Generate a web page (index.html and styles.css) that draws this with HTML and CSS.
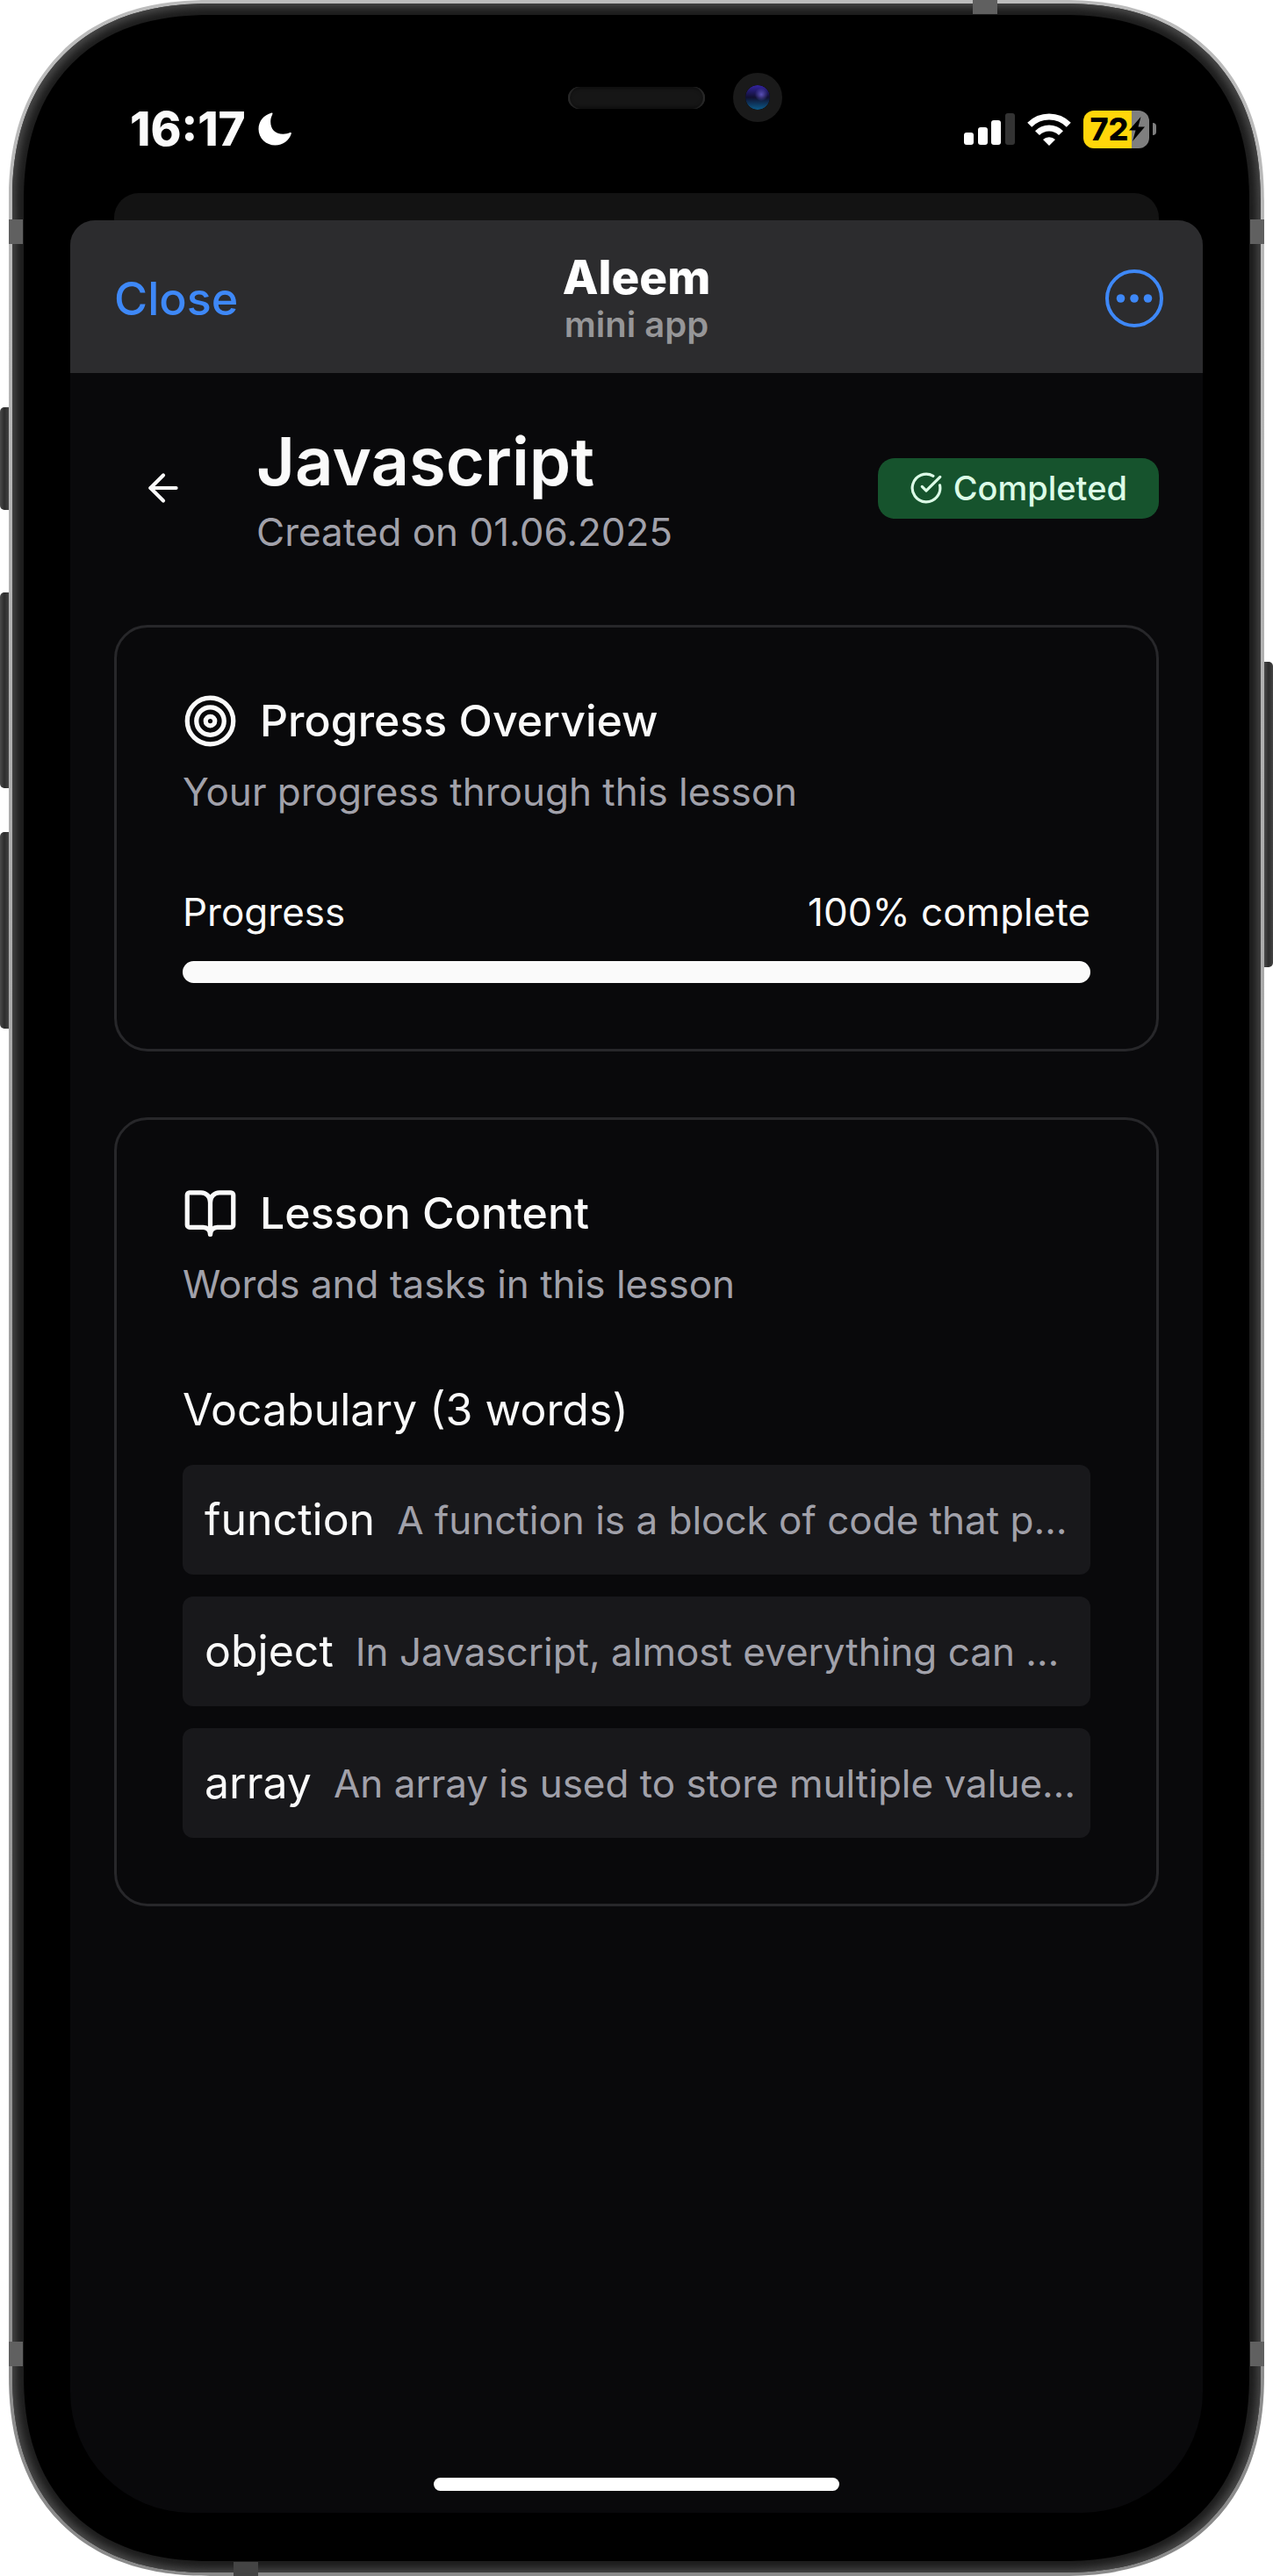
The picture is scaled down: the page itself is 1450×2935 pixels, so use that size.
FILE: index.html
```html
<!DOCTYPE html>
<html lang="en">
<head>
    <meta charset="UTF-8">
    <meta name="viewport" content="width=device-width, initial-scale=1.0">
    <title>Aleem - Javascript</title>
    <link rel="stylesheet" href="styles.css">
</head>
<body>
    <div class="phone">
        <span class="side-button mute"></span>
        <span class="side-button volume-up"></span>
        <span class="side-button volume-down"></span>
        <span class="side-button power"></span>

        <div class="frame">
            <span class="antenna top"></span>
            <span class="antenna bottom"></span>
            <span class="antenna upper-left"></span>
            <span class="antenna upper-right"></span>
            <span class="antenna lower-left"></span>
            <span class="antenna lower-right"></span>

            <div class="ring">
                <div class="bezel">
                    <div class="notch">
                        <span class="speaker"></span>
                        <span class="camera"></span>
                    </div>

                    <div class="status-bar">
                        <div class="status-left">
                            <span class="clock">16:17</span>
                            <svg class="moon" viewBox="0 0 38 38" aria-hidden="true">
                                <path d="M15.500 0.500C6.500 3 0.500 10 0.500 19C0.500 29.500 9 37.500 19.500 37.500C28.500 37.500 35.500 32 37.800 24.300C38.100 23.300 37.200 22.600 36.300 23.100C34 24.300 31.500 24.800 28.500 24.800C19.500 24.800 14.200 19.300 14.200 10.800C14.200 7.500 15 5 16.200 2.500C16.800 1.200 16.500 0.300 15.500 0.500Z" fill="#fff"/>
                            </svg>
                        </div>
                        <div class="status-right">
                            <svg class="signal" viewBox="0 0 58 36" aria-hidden="true">
                                <rect x="0" y="22" width="11" height="14" rx="3" fill="#fff"/>
                                <rect x="16" y="16" width="11" height="20" rx="3" fill="#fff"/>
                                <rect x="31" y="8" width="11" height="28" rx="3" fill="#fff"/>
                                <rect x="47" y="0" width="11" height="36" rx="3" fill="#333"/>
                            </svg>
                            <svg class="wifi" viewBox="0 0 50 37" aria-hidden="true">
                                <g fill="none" stroke="#fff" stroke-width="7">
                                    <path d="M2.700 13.300A31.500 31.500 0 0 1 47.300 13.300"/>
                                    <path d="M11.500 22.600A19 19 0 0 1 38.500 22.600"/>
                                </g>
                                <path d="M25 37L18 30A10 10 0 0 1 32 30Z" fill="#fff"/>
                            </svg>
                            <div class="battery">
                                <span class="battery-body">
                                    72
                                    <svg class="bolt" viewBox="0 0 18 28" aria-hidden="true">
                                        <path d="M13.500 0L0 15.500H7.500L4 28L18 11.500H10.500Z" fill="#000"/>
                                    </svg>
                                </span>
                                <span class="battery-tip"></span>
                            </div>
                        </div>
                    </div>

                    <div class="back-card"></div>

                    <div class="sheet">
                        <header class="app-header">
                            <button class="close-button" type="button">Close</button>
                            <div class="app-title">
                                <strong>Aleem</strong>
                                <span>mini app</span>
                            </div>
                            <button class="more-button" type="button" aria-label="More">
                                <svg viewBox="0 0 68 68" aria-hidden="true">
                                    <circle cx="34" cy="34" r="31" fill="none" stroke="currentColor" stroke-width="4"/>
                                    <g fill="currentColor">
                                        <circle cx="18.500" cy="34" r="4.800"/>
                                        <circle cx="34" cy="34" r="4.800"/>
                                        <circle cx="49.500" cy="34" r="4.800"/>
                                    </g>
                                </svg>
                            </button>
                        </header>

                        <main>
                            <div class="lesson-header">
                                <button class="back-button" type="button" aria-label="Back">
                                    <svg class="icon" viewBox="0 0 24 24" aria-hidden="true">
                                        <path d="m12 19-7-7 7-7"/>
                                        <path d="M19 12H5"/>
                                    </svg>
                                </button>
                                <div class="lesson-title">
                                    <h1>Javascript</h1>
                                    <p>Created on 01.06.2025</p>
                                </div>
                                <span class="badge">
                                    <svg class="icon" viewBox="0 0 24 24" aria-hidden="true">
                                        <path d="M21.801 10A10 10 0 1 1 17 3.335"/>
                                        <path d="m9 11 3 3L22 4"/>
                                    </svg>
                                    Completed
                                </span>
                            </div>

                            <section class="card">
                                <h2>
                                    <svg class="icon" viewBox="0 0 24 24" aria-hidden="true">
                                        <circle cx="12" cy="12" r="10"/>
                                        <circle cx="12" cy="12" r="6"/>
                                        <circle cx="12" cy="12" r="2"/>
                                    </svg>
                                    Progress Overview
                                </h2>
                                <p class="description">Your progress through this lesson</p>
                                <div class="progress-row">
                                    <label for="lessonProgress">Progress</label>
                                    <span>100% complete</span>
                                </div>
                                <progress id="lessonProgress" value="100" max="100"></progress>
                            </section>

                            <section class="card">
                                <h2>
                                    <svg class="icon" viewBox="0 0 24 24" aria-hidden="true">
                                        <path d="M12 7v14"/>
                                        <path d="M3 18a1 1 0 0 1-1-1V4a1 1 0 0 1 1-1h5a4 4 0 0 1 4 4 4 4 0 0 1 4-4h5a1 1 0 0 1 1 1v13a1 1 0 0 1-1 1h-6a3 3 0 0 0-3 3 3 3 0 0 0-3-3z"/>
                                    </svg>
                                    Lesson Content
                                </h2>
                                <p class="description">Words and tasks in this lesson</p>
                                <h3>Vocabulary (3 words)</h3>
                                <ul class="words">
                                    <li>
                                        <span class="word">function</span>
                                        <span class="meaning">A function is a block of code that performs a particular task</span>
                                    </li>
                                    <li>
                                        <span class="word">object</span>
                                        <span class="meaning">In Javascript, almost everything can be an object</span>
                                    </li>
                                    <li>
                                        <span class="word">array</span>
                                        <span class="meaning">An array is used to store multiple values in a single variable</span>
                                    </li>
                                </ul>
                            </section>
                        </main>

                        <span class="home-indicator"></span>
                    </div>
                </div>
            </div>
        </div>
    </div>
</body>
</html>
```
FILE: styles.css
```css
* {
    box-sizing: border-box;
}

body {
    margin: 0;
    background-color: #fff;
    color: #fafafa;
    font-family: Inter, "Liberation Sans", sans-serif;
}

h1, h2, h3, p, ul {
    margin: 0;
    padding: 0;
    font-weight: 400;
}

button {
    padding: 0;
    border: none;
    background: none;
    color: inherit;
    font-family: inherit;
    cursor: pointer;
}

svg {
    display: block;
    flex-shrink: 0;
}

.icon {
    fill: none;
    stroke: currentColor;
    stroke-width: 2;
    stroke-linecap: round;
    stroke-linejoin: round;
}

/* Phone body */
.phone {
    position: relative;
    display: flex;
    min-height: 100vh;
    padding: 0 10px;
}

.frame {
    position: relative;
    display: flex;
    flex: 1;
    min-width: 0;
    padding: 4px;
    border-radius: 204px;
    background: linear-gradient(#bcbcbc, #b4b4b4 20%, #8a8a8a);
}

.ring {
    display: flex;
    flex: 1;
    min-width: 0;
    padding: 13px;
    border-radius: 200px;
    background-color: #1c1c1c;
    box-shadow: inset 0 0 10px 4px #4a4a4a;
}

.bezel {
    position: relative;
    display: flex;
    flex-direction: column;
    flex: 1;
    min-width: 0;
    padding: 57px 53px 55px;
    border-radius: 187px;
    background-color: #000;
}

.side-button {
    position: absolute;
    left: 0;
    width: 10px;
    border-radius: 5px 0 0 5px;
    background: linear-gradient(90deg, #4a4a4a, #2c2c2c 50%, #444);
}

.mute {
    top: 464px;
    height: 117px;
}

.volume-up {
    top: 675px;
    height: 223px;
}

.volume-down {
    top: 948px;
    height: 224px;
}

.power {
    top: 754px;
    right: 0;
    left: auto;
    height: 348px;
    border-radius: 0 5px 5px 0;
}

.antenna {
    position: absolute;
    background-color: #606060;
}

.antenna.top,
.antenna.bottom {
    width: 28px;
    height: 16px;
}

.antenna.top {
    top: 0;
    right: 304px;
}

.antenna.bottom {
    bottom: 0;
    left: 256px;
    background-color: #444;
}

.upper-left,
.upper-right,
.lower-left,
.lower-right {
    width: 16px;
    height: 28px;
}

.upper-left,
.upper-right {
    top: 250px;
}

.lower-left,
.lower-right {
    bottom: 239px;
}

.upper-left,
.lower-left {
    left: 0;
}

.upper-right,
.lower-right {
    right: 0;
}

.notch {
    position: absolute;
    top: 66px;
    right: 0;
    left: 0;
    display: flex;
    align-items: center;
    justify-content: center;
    gap: 32px;
    padding-left: 88px;
}

.speaker {
    width: 156px;
    height: 25px;
    border-radius: 13px;
    background-color: #161616;
    box-shadow: inset 0 0 5px #000, inset 2px 0 1px #444, inset -2px 0 1px #444;
}

.camera {
    width: 56px;
    height: 56px;
    border: 14px solid #1a1a1a;
    border-radius: 50%;
    background: radial-gradient(circle at 65% 38%, #5a50b8, transparent 30%), linear-gradient(#3424a0, #101030 50%, #0c5a88);
    background-clip: padding-box;
}

/* Status bar */
.status-bar {
    display: flex;
    align-items: center;
    justify-content: space-between;
    height: 146px;
    padding: 0 53px 0 68px;
}

.status-left,
.status-right {
    display: flex;
    align-items: center;
    gap: 14px;
}

.clock {
    font-size: 53px;
    font-weight: 800;
    line-height: 60px;
}

.moon {
    width: 38px;
    height: 38px;
}

.signal {
    width: 58px;
    height: 36px;
}

.wifi {
    width: 50px;
    height: 37px;
}

.battery {
    display: flex;
    align-items: center;
    gap: 4px;
}

.battery-body {
    display: flex;
    align-items: center;
    justify-content: center;
    width: 75px;
    height: 43px;
    padding-left: 2px;
    border-radius: 12px;
    background: linear-gradient(90deg, #ffd60a 73%, #7f7f7f 73%);
    color: #000;
    font-size: 36px;
    font-weight: 800;
}

.bolt {
    width: 18px;
    height: 28px;
}

.battery-tip {
    width: 4px;
    height: 14px;
    border-radius: 0 6px 6px 0;
    background-color: #7f7f7f;
}

/* Mini app sheet */
.back-card {
    height: 31px;
    margin: 0 50px;
    border-radius: 28px 28px 0 0;
    background-color: #131313;
}

.sheet {
    position: relative;
    flex: 1;
    overflow: hidden;
    border-radius: 28px 28px 138px 138px;
    background-color: #09090b;
}

.app-header {
    display: grid;
    grid-template-columns: 1fr auto 1fr;
    align-items: center;
    height: 174px;
    padding: 4px 44px 0;
    background-color: #2c2c2e;
}

.close-button {
    justify-self: start;
    padding-left: 6px;
    color: #3e88f7;
    font-size: 52px;
    font-weight: 500;
}

.app-title {
    display: flex;
    flex-direction: column;
    text-align: center;
}

.app-title strong {
    color: #fff;
    font-size: 53px;
    font-weight: 800;
    line-height: 60px;
}

.app-title span {
    color: #969698;
    font-size: 40px;
    font-weight: 600;
    line-height: 48px;
}

.more-button {
    justify-self: end;
    color: #3e88f7;
}

.more-button svg {
    width: 68px;
    height: 68px;
}

main {
    display: flex;
    flex-direction: column;
    gap: 75px;
    padding: 50px 50px 100px;
}

.lesson-header {
    display: flex;
    align-items: center;
}

.back-button {
    display: flex;
    justify-content: center;
    width: 112px;
    margin-right: 50px;
}

.back-button .icon {
    width: 50px;
    height: 50px;
}

.lesson-title {
    flex: 1;
}

h1 {
    font-size: 76px;
    font-weight: 600;
    line-height: 100px;
}

.lesson-title p,
.description {
    color: #a1a1aa;
    font-size: 44px;
    line-height: 62px;
}

.badge {
    display: flex;
    align-items: center;
    gap: 12px;
    height: 69px;
    padding: 0 36px;
    border-radius: 19px;
    background-color: #16532d;
    color: #dcfce7;
    font-size: 38px;
    font-weight: 500;
}

.badge .icon {
    width: 38px;
    height: 38px;
}

/* Cards */
.card {
    padding: 75px;
    border: 3px solid #27272a;
    border-radius: 38px;
}

.card h2 {
    display: flex;
    align-items: center;
    gap: 25px;
    margin-bottom: 18px;
    font-size: 50px;
    font-weight: 500;
    line-height: 63px;
}

.card h2 .icon {
    width: 63px;
    height: 63px;
}

.description {
    margin-bottom: 75px;
}

.progress-row {
    display: flex;
    justify-content: space-between;
    margin-bottom: 25px;
    font-size: 44px;
    line-height: 62px;
}

progress {
    display: block;
    width: 100%;
    height: 25px;
    overflow: hidden;
    border: none;
    border-radius: 13px;
    background-color: #27272a;
    appearance: none;
}

progress::-webkit-progress-bar {
    background-color: #27272a;
}

progress::-webkit-progress-value {
    background-color: #fafafa;
}

.card h3 {
    margin-bottom: 25px;
    font-size: 50px;
    line-height: 75px;
}

.words {
    display: flex;
    flex-direction: column;
    gap: 25px;
    list-style: none;
}

.words li {
    display: flex;
    align-items: center;
    gap: 25px;
    padding: 25px 14px 25px 25px;
    border-radius: 12px;
    background-color: #18181b;
}

.word {
    font-size: 50px;
    line-height: 75px;
}

.meaning {
    overflow: hidden;
    color: #a1a1aa;
    font-size: 44px;
    line-height: 62px;
    text-overflow: ellipsis;
    white-space: nowrap;
}

.home-indicator {
    position: absolute;
    right: 0;
    bottom: 25px;
    left: 0;
    width: 462px;
    height: 15px;
    margin: 0 auto;
    border-radius: 8px;
    background-color: #fff;
}

/* Smoother corners where the browser can draw them */
@supports (corner-shape: superellipse(1.2)) {
    .frame,
    .ring,
    .bezel {
        corner-shape: superellipse(1.2);
    }

    .frame {
        border-radius: 229px;
    }

    .ring {
        border-radius: 225px;
    }

    .bezel {
        border-radius: 212px;
    }
}
```
